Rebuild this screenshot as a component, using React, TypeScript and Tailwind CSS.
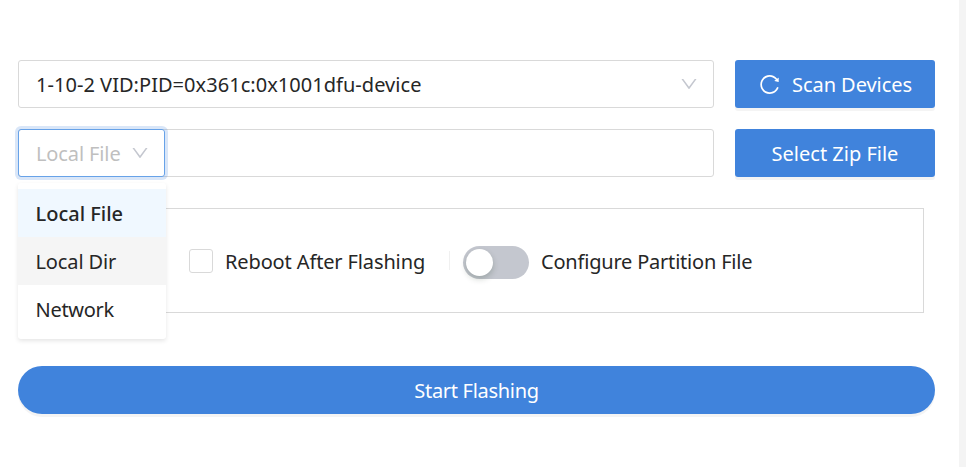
import { AiOutlineDown, AiOutlineReload } from "react-icons/ai";

const options = [
  { label: "Local File", style: "bg-[#f0f8ff] font-medium" },
  { label: "Local Dir", style: "bg-[#f5f5f5] tracking-[-0.12px]" },
  { label: "Network", style: "bg-white tracking-[-0.3px]" },
];

function PrimaryButton({ children, className }: { children: React.ReactNode; className: string }) {
  return (
    <button
      className={`flex h-12 shrink-0 items-center justify-center bg-[#4083dc] text-white shadow-[0_3px_0_rgba(0,0,0,0.045)] ${className}`}
    >
      {children}
    </button>
  );
}

export default function App() {
  return (
    <div className="flex h-[467px] w-[966px] overflow-hidden bg-[#f4f4f4] font-['Noto_Sans','Open_Sans',sans-serif] text-[20px] leading-[30px] text-[#262626]">
      <main className="flex w-[959px] flex-col bg-white pt-[60px] pr-6 pl-[18px]">
        <div className="flex gap-[21px]">
          <div className="flex h-12 w-[696px] items-center justify-between rounded-[3px] border border-[#d9d9d9] pr-[14px] pl-[17px]">
            <span className="pt-0.5 tracking-[0.04px] whitespace-nowrap">1-10-2 VID:PID=0x361c:0x1001dfu-device</span>
            <AiOutlineDown className="size-5 text-[#c4c7cf]" />
          </div>
          <PrimaryButton className="w-[200px] gap-[11px] rounded-[3px]">
            <AiOutlineReload className="size-[23px]" />
            <span className="pt-0.5 tracking-[-0.05px] whitespace-nowrap">Scan Devices</span>
          </PrimaryButton>
        </div>

        <div className="mt-[21px] flex gap-[21px]">
          <div className="flex h-12 w-[696px] rounded-[3px] border border-[#d9d9d9]">
            <div className="relative -m-px flex h-12 w-[147px] items-center justify-between rounded-[3px] border border-[#67a2e8] pr-[14px] pl-[17px] text-[#bfbfbf] shadow-[0_0_0_3px_rgba(64,131,220,0.2)]">
              <span className="pt-0.5 tracking-[-0.12px] whitespace-nowrap">Local File</span>
              <AiOutlineDown className="size-5 text-[#c4c7cf]" />
              <ul className="absolute top-[53px] -left-px z-10 w-[148px] rounded-[3px] bg-white py-1.5 text-[#262626] shadow-[0_2px_4px_rgba(0,0,0,0.1)]">
                {options.map((o) => (
                  <li key={o.label} className={`flex h-12 items-center pt-0.5 pl-[17.5px] whitespace-nowrap ${o.style}`}>
                    {o.label}
                  </li>
                ))}
              </ul>
            </div>
          </div>
          <PrimaryButton className="w-[200px] rounded-[3px]">
            <span className="pt-0.5 whitespace-nowrap">Select Zip File</span>
          </PrimaryButton>
        </div>

        <section className="mt-[31px] flex h-[105px] w-[906px] items-center border border-[#d9d9d9] pl-[170px]">
          <span className="size-6 rounded-[3px] border border-[#d9d9d9]" />
          <span className="ml-3 w-[200px] pt-0.5 tracking-[-0.13px] whitespace-nowrap">Reboot After Flashing</span>
          <span className="ml-6 h-[19px] w-px bg-[#f0f0f0]" />
          <span className="ml-[13px] mt-1 flex h-[33px] w-[66px] items-center rounded-full bg-[#c4c7cf] pl-[3px]">
            <span className="size-[27px] rounded-full bg-white shadow-[0_3px_6px_rgba(0,35,11,0.2)]" />
          </span>
          <span className="ml-3 pt-0.5 tracking-[-0.2px] whitespace-nowrap">Configure Partition File</span>
        </section>

        <PrimaryButton className="mt-[53px] w-[917px] rounded-full">
          <span className="pt-0.5 tracking-[-0.3px] whitespace-nowrap">Start Flashing</span>
        </PrimaryButton>
      </main>
    </div>
  );
}
